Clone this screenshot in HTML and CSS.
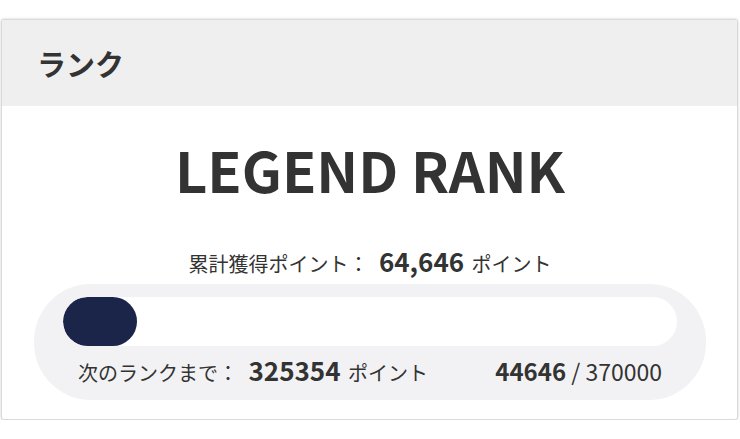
FILE: index.html
```html
<!DOCTYPE html>
<html lang="ja">
<head>
  <meta charset="UTF-8" />
  <meta name="viewport" content="width=device-width, initial-scale=1.0"/>
  <title>ランク</title>
  <link rel="stylesheet" href="styles.css">
</head>
<body>
  <div class="card">
    <div class="card-header">
      <h2>ランク</h2>
    </div>
    <div class="card-body">
      <h1 class="rank-name">LEGEND RANK</h1>
      <p class="total">累計獲得ポイント： <strong>64,646</strong> ポイント</p>
      <div class="progress">
        <div class="bar">
          <div class="fill" style="width: 12%"></div>
        </div>
        <div class="progress-info">
          <span class="next">次のランクまで： <strong>325354</strong> ポイント</span>
          <span class="count"><strong>44646</strong> / 370000</span>
        </div>
      </div>
    </div>
  </div>
</body>
</html>
```

FILE: styles.css
```css
:root {
  --text: #333;
  --navy: #1b2449;
  --header-bg: #f0efef;
  --track: #f2f2f4;
}
body {
  font-family: "Noto Sans CJK JP", "Noto Sans", sans-serif;
  color: var(--text);
  background: #fff;
  margin: 0;
  padding: 19px 2px 0 1px;
  text-spacing-trim: space-all;
}
.card {
  border: 1px solid #d9d9d9;
  border-radius: 3px;
  box-shadow: 0 0 3px rgba(0,0,0,0.18);
  overflow: hidden;
  background: #fff;
}
.card-header {
  background: var(--header-bg);
  height: 86px;
  display: flex;
  align-items: center;
  padding: 0 35px;
}
.card-header h2 {
  margin: 0;
  font-size: 29px;
  font-weight: 700;
  line-height: 1;
}
.card-body {
  padding: 0 31px 19px 32px;
  text-align: center;
}
.rank-name {
  margin: 35px 0 0;
  font-size: 56px;
  font-weight: 700;
  line-height: 1;
}
.total {
  margin: 51px 0 4px;
  font-size: 20px;
  line-height: 32px;
}
.total strong,
.next strong {
  font-size: 26px;
  font-weight: 700;
  line-height: 1;
  margin: 0 3px 0 6px;
}
.progress {
  background: var(--track);
  border-radius: 57px;
  padding: 13px 29px 12px;
}
.bar {
  background: #fff;
  height: 49px;
  border-radius: 25px;
  overflow: hidden;
}
.fill {
  background: var(--navy);
  height: 100%;
  border-radius: 25px;
}
.progress-info {
  display: flex;
  justify-content: space-between;
  align-items: baseline;
  padding: 10px 15px 0;
  font-size: 20px;
  line-height: 30px;
}
.count {
  font-size: 23px;
}
.count strong {
  font-size: 24px;
  font-weight: 700;
  line-height: 1;
}
```
